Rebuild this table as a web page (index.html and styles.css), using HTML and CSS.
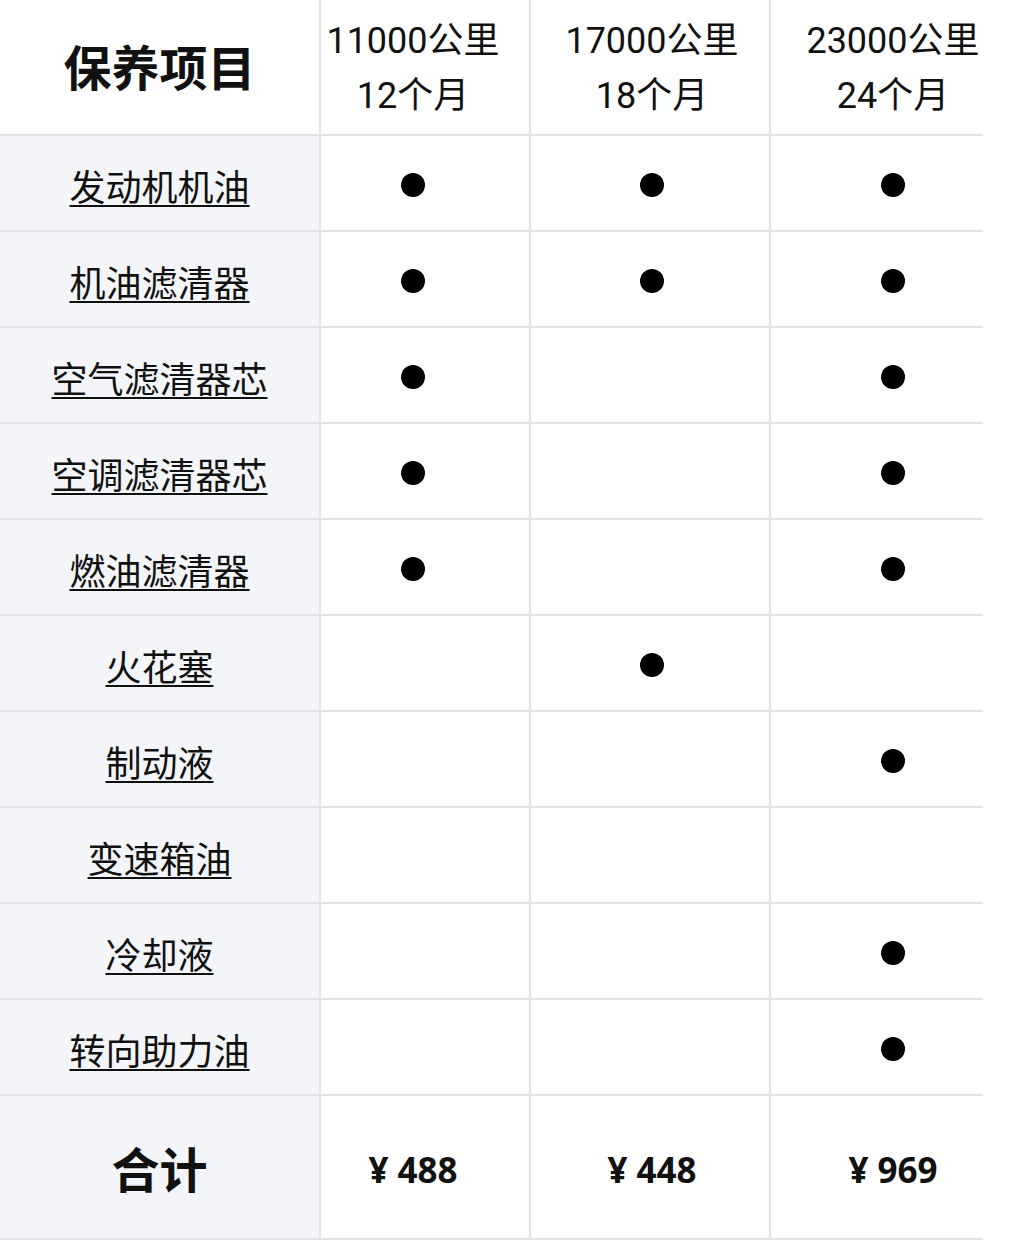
FILE: index.html
```html
<!DOCTYPE html>
<html lang="zh-CN">
<head>
<meta charset="utf-8">
<title>保养项目</title>
<link rel="stylesheet" href="styles.css">
</head>
<body>
<div class="table">
  <div class="row head">
    <div class="cell c1 title">保养项目</div>
    <div class="cell c2 period">11000公里<br>12个月</div>
    <div class="cell c3 period">17000公里<br>18个月</div>
    <div class="cell c4 period">23000公里<br>24个月</div>
  </div>
  <div class="row item">
    <div class="cell c1 name"><span>发动机机油</span></div>
    <div class="cell c2"><i class="dot"></i></div>
    <div class="cell c3"><i class="dot"></i></div>
    <div class="cell c4"><i class="dot"></i></div>
  </div>
  <div class="row item">
    <div class="cell c1 name"><span>机油滤清器</span></div>
    <div class="cell c2"><i class="dot"></i></div>
    <div class="cell c3"><i class="dot"></i></div>
    <div class="cell c4"><i class="dot"></i></div>
  </div>
  <div class="row item">
    <div class="cell c1 name"><span>空气滤清器芯</span></div>
    <div class="cell c2"><i class="dot"></i></div>
    <div class="cell c3"></div>
    <div class="cell c4"><i class="dot"></i></div>
  </div>
  <div class="row item">
    <div class="cell c1 name"><span>空调滤清器芯</span></div>
    <div class="cell c2"><i class="dot"></i></div>
    <div class="cell c3"></div>
    <div class="cell c4"><i class="dot"></i></div>
  </div>
  <div class="row item">
    <div class="cell c1 name"><span>燃油滤清器</span></div>
    <div class="cell c2"><i class="dot"></i></div>
    <div class="cell c3"></div>
    <div class="cell c4"><i class="dot"></i></div>
  </div>
  <div class="row item">
    <div class="cell c1 name"><span>火花塞</span></div>
    <div class="cell c2"></div>
    <div class="cell c3"><i class="dot"></i></div>
    <div class="cell c4"></div>
  </div>
  <div class="row item">
    <div class="cell c1 name"><span>制动液</span></div>
    <div class="cell c2"></div>
    <div class="cell c3"></div>
    <div class="cell c4"><i class="dot"></i></div>
  </div>
  <div class="row item">
    <div class="cell c1 name"><span>变速箱油</span></div>
    <div class="cell c2"></div>
    <div class="cell c3"></div>
    <div class="cell c4"></div>
  </div>
  <div class="row item">
    <div class="cell c1 name"><span>冷却液</span></div>
    <div class="cell c2"></div>
    <div class="cell c3"></div>
    <div class="cell c4"><i class="dot"></i></div>
  </div>
  <div class="row item">
    <div class="cell c1 name"><span>转向助力油</span></div>
    <div class="cell c2"></div>
    <div class="cell c3"></div>
    <div class="cell c4"><i class="dot"></i></div>
  </div>
  <div class="row total">
    <div class="cell c1 title">合计</div>
    <div class="cell c2 price">¥ 488</div>
    <div class="cell c3 price">¥ 448</div>
    <div class="cell c4 price">¥ 969</div>
  </div>
</div>
</body>
</html>
```

FILE: styles.css
```css
html, body {
  margin: 0;
  padding: 0;
  background: #ffffff;
}

body {
  font-family: "Noto Sans CJK SC", "Noto Sans", sans-serif;
  color: #111111;
}

.table {
  width: 983px;
  display: flex;
  flex-direction: column;
}

.row {
  display: grid;
  grid-template-columns: 321px 210px 240px 212px;
}

.row.head { height: 136px; }
.row.item { height: 96px; }
.row.total { height: 144px; }

.cell {
  box-sizing: border-box;
  display: flex;
  align-items: center;
  justify-content: center;
  text-align: center;
  border-bottom: 2px solid #e2e3e8;
  border-right: 2px solid #e2e3e8;
}

.cell.c2 { padding-right: 24px; }
.cell.c3 { padding-left: 4px; }
.cell.c4 { border-right: none; padding-left: 32px; }

.item .c1, .total .c1 {
  background: #f3f5f9;
}

.title {
  font-size: 48px;
  font-weight: 700;
  color: #111111;
}

.head .title { padding-bottom: 4px; }

.period {
  font-family: Roboto, "Noto Sans CJK SC", sans-serif;
  font-size: 36px;
  line-height: 55px;
  padding-top: 4px;
}

.name {
  font-size: 36px;
  line-height: 1;
  padding-top: 3px;
}

.name span {
  text-decoration: underline;
  text-decoration-thickness: 2px;
  text-underline-offset: 4px;
}

.dot {
  display: block;
  width: 24px;
  height: 24px;
  border-radius: 50%;
  background: #000000;
  margin-top: 4px;
}

.price {
  font-family: "Open Sans", "Noto Sans CJK SC", sans-serif;
  font-size: 35px;
  font-weight: 700;
  padding-top: 4px;
}
```
